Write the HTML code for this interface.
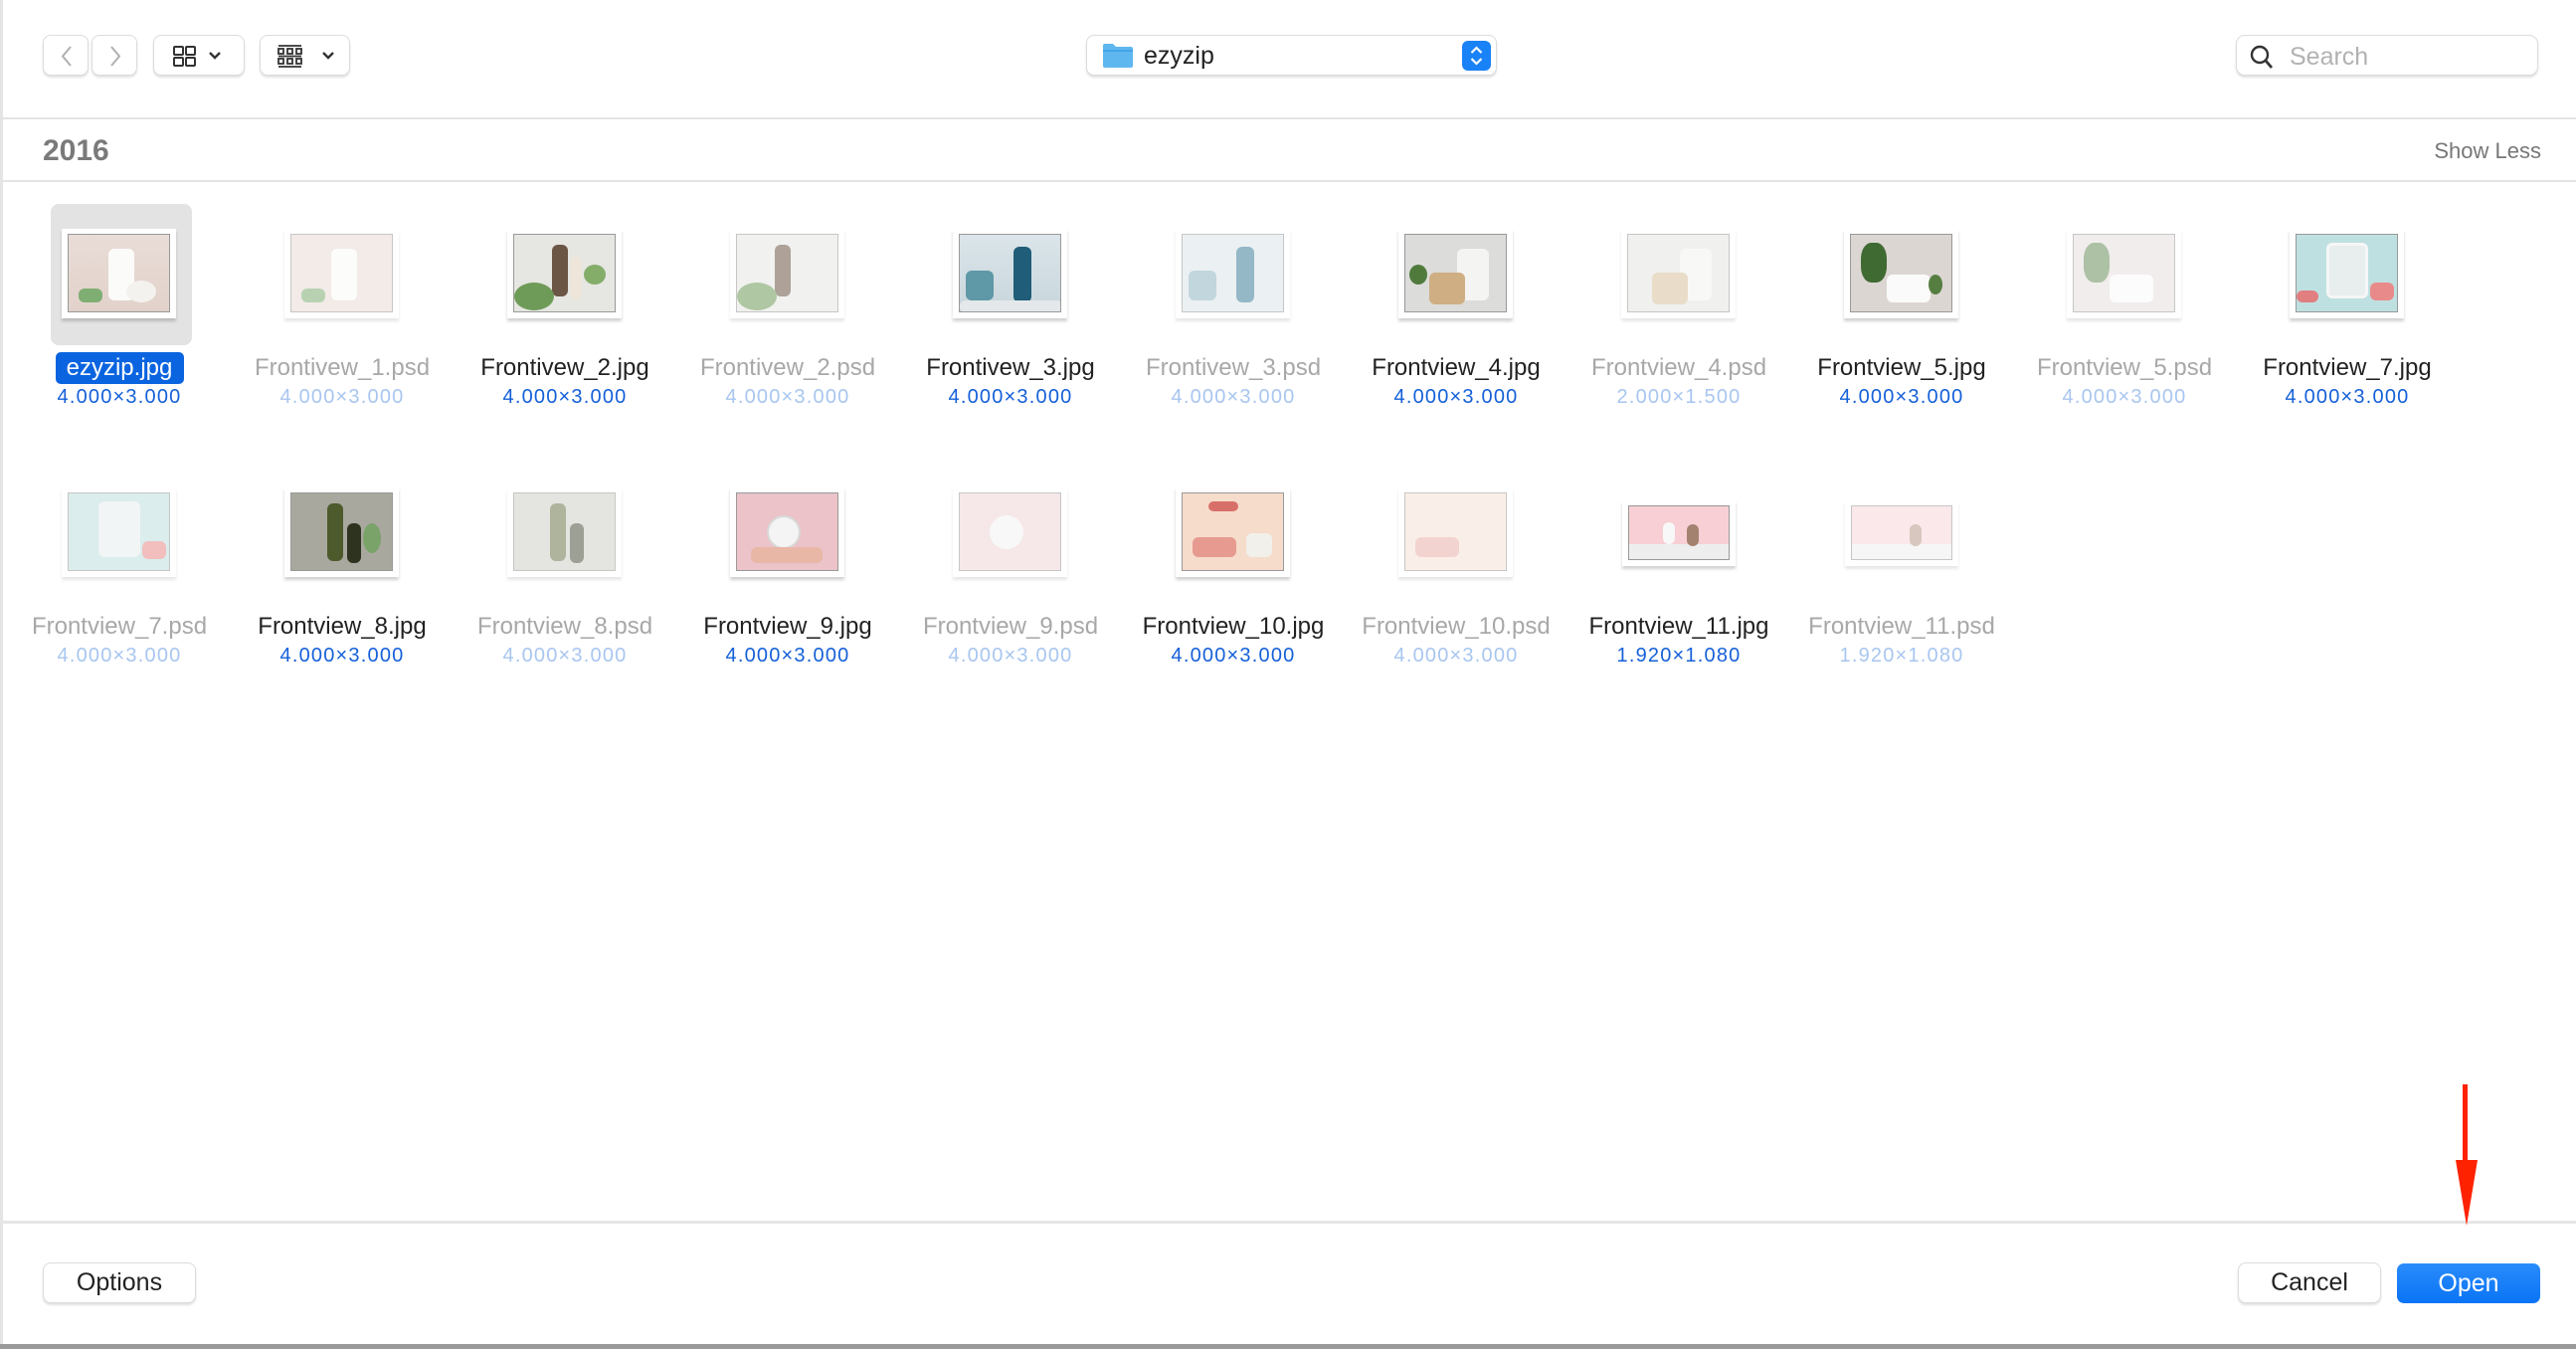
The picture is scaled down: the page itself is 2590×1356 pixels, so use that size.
<!DOCTYPE html>
<html><head><meta charset="utf-8"><style>
*{box-sizing:border-box;margin:0;padding:0}
body{width:2590px;height:1356px;background:#fff;font-family:"Liberation Sans",sans-serif;position:relative;overflow:hidden}
.a{position:absolute}
.btn{position:absolute;background:#fff;border:1px solid #dcdcdc;border-radius:8px;box-shadow:0 2px 2px rgba(0,0,0,.12)}
.it{position:absolute;width:224px;text-align:center}
.fr{position:absolute;left:54px;width:115px;height:90px;background:#fff;box-shadow:0 3px 3px rgba(0,0,0,.18);padding:5px 6px 6px}
.fr .p{width:100%;height:100%;border:1px solid #999;position:relative;overflow:hidden}
.nm{position:absolute;left:-20px;width:264px;top:126px;font-size:24px;color:#222;white-space:nowrap}
.sz{position:absolute;left:-20px;width:264px;top:158px;font-size:20px;color:#1560d8;letter-spacing:1.2px}
.f .nm{color:#a8a8a8}.f .sz{color:#a8c6f0}.f .fr{opacity:.55}
.b1{position:absolute;border-radius:6px}
</style></head><body>
<div class="a" style="left:0;top:0;width:3px;height:1351px;background:#e4e4e4"></div>
<!-- toolbar -->
<div class="btn" style="left:43px;top:35px;width:46px;height:41px"><svg width="46" height="41" viewBox="0 0 46 41"><path d="M27 11 L19 20.5 L27 30" stroke="#b0b0b0" stroke-width="2" fill="none"/></svg></div>
<div class="btn" style="left:92px;top:35px;width:46px;height:41px"><svg width="46" height="41" viewBox="0 0 46 41"><path d="M19 11 L27 20.5 L19 30" stroke="#b0b0b0" stroke-width="2" fill="none"/></svg></div>
<div class="btn" style="left:154px;top:35px;width:92px;height:41px"><svg width="92" height="41" viewBox="0 0 92 41"><g stroke="#333" stroke-width="2" fill="none"><rect x="20" y="11" width="9" height="8" rx="1"/><rect x="32" y="11" width="9" height="8" rx="1"/><rect x="20" y="22" width="9" height="8" rx="1"/><rect x="32" y="22" width="9" height="8" rx="1"/><path d="M56 17 L61 22 L66 17" stroke-width="2.4"/></g></svg></div>
<div class="btn" style="left:261px;top:35px;width:91px;height:41px"><svg width="91" height="41" viewBox="0 0 91 41"><g stroke="#333" stroke-width="1.8" fill="none"><path d="M18 10 H41 M18 20.5 H41 M18 31 H41"/><rect x="18" y="13" width="5" height="5"/><rect x="27" y="13" width="5" height="5"/><rect x="36" y="13" width="5" height="5"/><rect x="18" y="23" width="5" height="5"/><rect x="27" y="23" width="5" height="5"/><rect x="36" y="23" width="5" height="5"/><path d="M63 17 L68 22 L73 17" stroke-width="2.4"/></g></svg></div>
<div class="btn" style="left:1092px;top:35px;width:413px;height:41px">
<svg class="a" style="left:15px;top:7px" width="32" height="26" viewBox="0 0 32 26"><path d="M1 3 Q1 1 3 1 H11 L14 4 H29 Q31 4 31 6 V23 Q31 25 29 25 H3 Q1 25 1 23Z" fill="#5fb7f0"/><path d="M1 8 H31" stroke="#3a9de6" stroke-width="1.5"/></svg>
<div class="a" style="left:57px;top:6px;font-size:25px;color:#222">ezyzip</div>
<div class="a" style="left:377px;top:5px;width:29px;height:30px;background:#1a82f7;border-radius:6px"><svg width="29" height="30" viewBox="0 0 29 30"><path d="M9.5 12 L14.5 7 L19.5 12 M9.5 18 L14.5 23 L19.5 18" stroke="#fff" stroke-width="2.2" fill="none"/></svg></div>
</div>
<div class="btn" style="left:2248px;top:35px;width:304px;height:41px;border-radius:9px">
<svg class="a" style="left:10px;top:7px" width="30" height="28" viewBox="0 0 30 28"><circle cx="13" cy="12" r="8" stroke="#333" stroke-width="2.4" fill="none"/><path d="M19 18 L25 25" stroke="#333" stroke-width="2.8"/></svg>
<div class="a" style="left:53px;top:7px;font-size:25px;color:#b2b2b2">Search</div>
</div>
<div class="a" style="left:0;top:118px;width:2590px;height:2px;background:#e4e4e4"></div>
<div class="a" style="left:43px;top:135px;font-size:30px;font-weight:bold;color:#7a7a7a">2016</div>
<div class="a" style="right:35px;top:139px;font-size:22px;color:#777">Show Less</div>
<div class="a" style="left:0;top:181px;width:2590px;height:2px;background:#e4e4e4"></div>

<!-- selection -->
<div class="a" style="left:51px;top:205px;width:142px;height:142px;background:#e3e3e3;border-radius:8px"></div>

<!-- row 1 -->
<div class="it" style="left:8px;top:230px"><div class="fr" style="top:0"><div class="p" style="background:linear-gradient(#e9dcd6,#e2d2cb)"><div class="b1" style="left:40px;top:14px;width:26px;height:52px;background:#fbfbf9"></div><div class="b1" style="left:58px;top:46px;width:30px;height:22px;background:#f4f2ee;border-radius:50%"></div><div class="b1" style="left:10px;top:54px;width:24px;height:14px;background:#7fae72"></div></div></div>
<div class="a" style="left:48px;top:124px;width:129px;height:32px;background:#0a64e0;border-radius:5px"></div><div class="nm" style="color:#fff">ezyzip.jpg</div><div class="sz">4.000×3.000</div></div>

<div class="it f" style="left:232px;top:230px"><div class="fr" style="top:0"><div class="p" style="background:#e9dcd6"><div class="b1" style="left:40px;top:14px;width:26px;height:52px;background:#fbfbf9"></div><div class="b1" style="left:10px;top:54px;width:24px;height:14px;background:#7fae72"></div></div></div><div class="nm">Frontivew_1.psd</div><div class="sz">4.000×3.000</div></div>

<div class="it" style="left:456px;top:230px"><div class="fr" style="top:0"><div class="p" style="background:#e6e6e2"><div class="b1" style="left:38px;top:10px;width:16px;height:52px;background:#6b5544"></div><div class="b1" style="left:56px;top:22px;width:12px;height:44px;background:#eee6da"></div><div class="b1" style="left:0;top:48px;width:40px;height:28px;background:#6f9b58;border-radius:50%"></div><div class="b1" style="left:70px;top:30px;width:22px;height:20px;background:#84ad6a;border-radius:50%"></div></div></div><div class="nm">Frontivew_2.jpg</div><div class="sz">4.000×3.000</div></div>

<div class="it f" style="left:680px;top:230px"><div class="fr" style="top:0"><div class="p" style="background:#e6e6e2"><div class="b1" style="left:38px;top:10px;width:16px;height:52px;background:#6b5544"></div><div class="b1" style="left:0;top:48px;width:40px;height:28px;background:#6f9b58;border-radius:50%"></div></div></div><div class="nm">Frontivew_2.psd</div><div class="sz">4.000×3.000</div></div>

<div class="it" style="left:904px;top:230px"><div class="fr" style="top:0"><div class="p" style="background:linear-gradient(#dbe5ea,#c8d6dc)"><div class="b1" style="left:54px;top:12px;width:18px;height:56px;background:#1f5d78"></div><div class="b1" style="left:6px;top:36px;width:28px;height:30px;background:#5f98a6"></div><div class="b1" style="left:0;top:66px;width:103px;height:12px;background:#e4e8ea"></div></div></div><div class="nm">Frontivew_3.jpg</div><div class="sz">4.000×3.000</div></div>

<div class="it f" style="left:1128px;top:230px"><div class="fr" style="top:0"><div class="p" style="background:#dbe5ea"><div class="b1" style="left:54px;top:12px;width:18px;height:56px;background:#3d7f99"></div><div class="b1" style="left:6px;top:36px;width:28px;height:30px;background:#8fb8c2"></div></div></div><div class="nm">Frontivew_3.psd</div><div class="sz">4.000×3.000</div></div>

<div class="it" style="left:1352px;top:230px"><div class="fr" style="top:0"><div class="p" style="background:#dcdcda"><div class="b1" style="left:52px;top:14px;width:32px;height:52px;background:#f4f4f2"></div><div class="b1" style="left:24px;top:38px;width:36px;height:32px;background:#cfae84"></div><div class="b1" style="left:4px;top:30px;width:18px;height:20px;background:#4f7a3c;border-radius:50%"></div></div></div><div class="nm">Frontview_4.jpg</div><div class="sz">4.000×3.000</div></div>

<div class="it f" style="left:1576px;top:230px"><div class="fr" style="top:0"><div class="p" style="background:#e4e4e2"><div class="b1" style="left:52px;top:14px;width:32px;height:52px;background:#f4f4f2"></div><div class="b1" style="left:24px;top:38px;width:36px;height:32px;background:#d8c09c"></div></div></div><div class="nm">Frontview_4.psd</div><div class="sz">2.000×1.500</div></div>

<div class="it" style="left:1800px;top:230px"><div class="fr" style="top:0"><div class="p" style="background:#dcd6d2"><div class="b1" style="left:10px;top:8px;width:26px;height:40px;background:#3f6b32;border-radius:40%"></div><div class="b1" style="left:36px;top:40px;width:44px;height:28px;background:#fafafa"></div><div class="b1" style="left:78px;top:40px;width:14px;height:20px;background:#557e40;border-radius:50%"></div></div></div><div class="nm">Frontview_5.jpg</div><div class="sz">4.000×3.000</div></div>

<div class="it f" style="left:2024px;top:230px"><div class="fr" style="top:0"><div class="p" style="background:#e4e0de"><div class="b1" style="left:10px;top:8px;width:26px;height:40px;background:#6b8f5c;border-radius:40%"></div><div class="b1" style="left:36px;top:40px;width:44px;height:28px;background:#fafafa"></div></div></div><div class="nm">Frontview_5.psd</div><div class="sz">4.000×3.000</div></div>

<div class="it" style="left:2248px;top:230px"><div class="fr" style="top:0"><div class="p" style="background:#bfe0e0"><div class="b1" style="left:30px;top:8px;width:42px;height:56px;background:#e8eeee;border:3px solid #f6f6f6"></div><div class="b1" style="left:74px;top:48px;width:24px;height:18px;background:#e88a8a"></div><div class="b1" style="left:0;top:56px;width:22px;height:12px;background:#e07e80"></div></div></div><div class="nm">Frontview_7.jpg</div><div class="sz">4.000×3.000</div></div>

<!-- row 2 -->
<div class="it f" style="left:8px;top:490px"><div class="fr" style="top:0"><div class="p" style="background:#bfe0e0"><div class="b1" style="left:30px;top:8px;width:42px;height:56px;background:#e8eeee"></div><div class="b1" style="left:74px;top:48px;width:24px;height:18px;background:#e88a8a"></div></div></div><div class="nm">Frontview_7.psd</div><div class="sz">4.000×3.000</div></div>

<div class="it" style="left:232px;top:490px"><div class="fr" style="top:0"><div class="p" style="background:#a8a89e"><div class="b1" style="left:36px;top:10px;width:16px;height:58px;background:#4d5a2c"></div><div class="b1" style="left:56px;top:30px;width:14px;height:40px;background:#2e3320"></div><div class="b1" style="left:72px;top:30px;width:18px;height:30px;background:#7aa36a;border-radius:50%"></div></div></div><div class="nm">Frontview_8.jpg</div><div class="sz">4.000×3.000</div></div>

<div class="it f" style="left:456px;top:490px"><div class="fr" style="top:0"><div class="p" style="background:#cfcfc8"><div class="b1" style="left:36px;top:10px;width:16px;height:58px;background:#6d7a4c"></div><div class="b1" style="left:56px;top:30px;width:14px;height:40px;background:#4e5340"></div></div></div><div class="nm">Frontview_8.psd</div><div class="sz">4.000×3.000</div></div>

<div class="it" style="left:680px;top:490px"><div class="fr" style="top:0"><div class="p" style="background:#ebc3c9"><div class="b1" style="left:30px;top:22px;width:34px;height:34px;background:#f4f4f4;border-radius:50%;border:2px solid #d8d8d8"></div><div class="b1" style="left:14px;top:54px;width:72px;height:16px;background:#e9b7a6;border-radius:6px"></div></div></div><div class="nm">Frontview_9.jpg</div><div class="sz">4.000×3.000</div></div>

<div class="it f" style="left:904px;top:490px"><div class="fr" style="top:0"><div class="p" style="background:#f0d4d8"><div class="b1" style="left:30px;top:22px;width:34px;height:34px;background:#f4f4f4;border-radius:50%"></div></div></div><div class="nm">Frontview_9.psd</div><div class="sz">4.000×3.000</div></div>

<div class="it" style="left:1128px;top:490px"><div class="fr" style="top:0"><div class="p" style="background:#f6dccb"><div class="b1" style="left:26px;top:8px;width:30px;height:10px;background:#d8706a"></div><div class="b1" style="left:10px;top:44px;width:44px;height:20px;background:#e79a90"></div><div class="b1" style="left:64px;top:40px;width:26px;height:24px;background:#f2f0ea"></div></div></div><div class="nm">Frontview_10.jpg</div><div class="sz">4.000×3.000</div></div>

<div class="it f" style="left:1352px;top:490px"><div class="fr" style="top:0"><div class="p" style="background:#f6e2d6"><div class="b1" style="left:10px;top:44px;width:44px;height:20px;background:#eab0a8"></div></div></div><div class="nm">Frontview_10.psd</div><div class="sz">4.000×3.000</div></div>

<div class="it" style="left:1576px;top:490px"><div class="fr" style="top:13px;left:55px;width:114px;height:66px"><div class="p" style="background:#f7cfd4"><div class="b1" style="left:0;top:38px;width:100px;height:16px;background:#eeeeee;border-radius:0"></div><div class="b1" style="left:34px;top:16px;width:12px;height:22px;background:#f8f8f8"></div><div class="b1" style="left:58px;top:18px;width:12px;height:22px;background:#a38270"></div></div></div><div class="nm">Frontview_11.jpg</div><div class="sz">1.920×1.080</div></div>

<div class="it f" style="left:1800px;top:490px"><div class="fr" style="top:13px;left:55px;width:114px;height:66px"><div class="p" style="background:#f7d6da"><div class="b1" style="left:0;top:38px;width:100px;height:16px;background:#f0f0f0;border-radius:0"></div><div class="b1" style="left:58px;top:18px;width:12px;height:22px;background:#b89a8a"></div></div></div><div class="nm">Frontview_11.psd</div><div class="sz">1.920×1.080</div></div>

<!-- bottom -->
<div class="a" style="left:0;top:1227px;width:2590px;height:3px;background:#e6e6e6"></div>
<div class="btn" style="left:43px;top:1269px;width:154px;height:41px;font-size:25px;color:#222;text-align:center;line-height:39px">Options</div>
<div class="btn" style="left:2250px;top:1269px;width:144px;height:41px;font-size:25px;color:#222;text-align:center;line-height:39px">Cancel</div>
<div class="a" style="left:2410px;top:1270px;width:144px;height:40px;background:linear-gradient(#2a8cfb,#0a74f5);border-radius:7px;font-size:25px;color:#fff;text-align:center;line-height:40px">Open</div>
<svg class="a" style="left:2460px;top:1088px" width="40" height="146" viewBox="0 0 40 146"><path d="M18.5 2 V80" stroke="#ff2200" stroke-width="5"/><path d="M9 78 L31 78 L20 144Z" fill="#ff2200"/></svg>
<div class="a" style="left:0;top:1351px;width:2590px;height:5px;background:#9a9a9a"></div>
</body></html>
